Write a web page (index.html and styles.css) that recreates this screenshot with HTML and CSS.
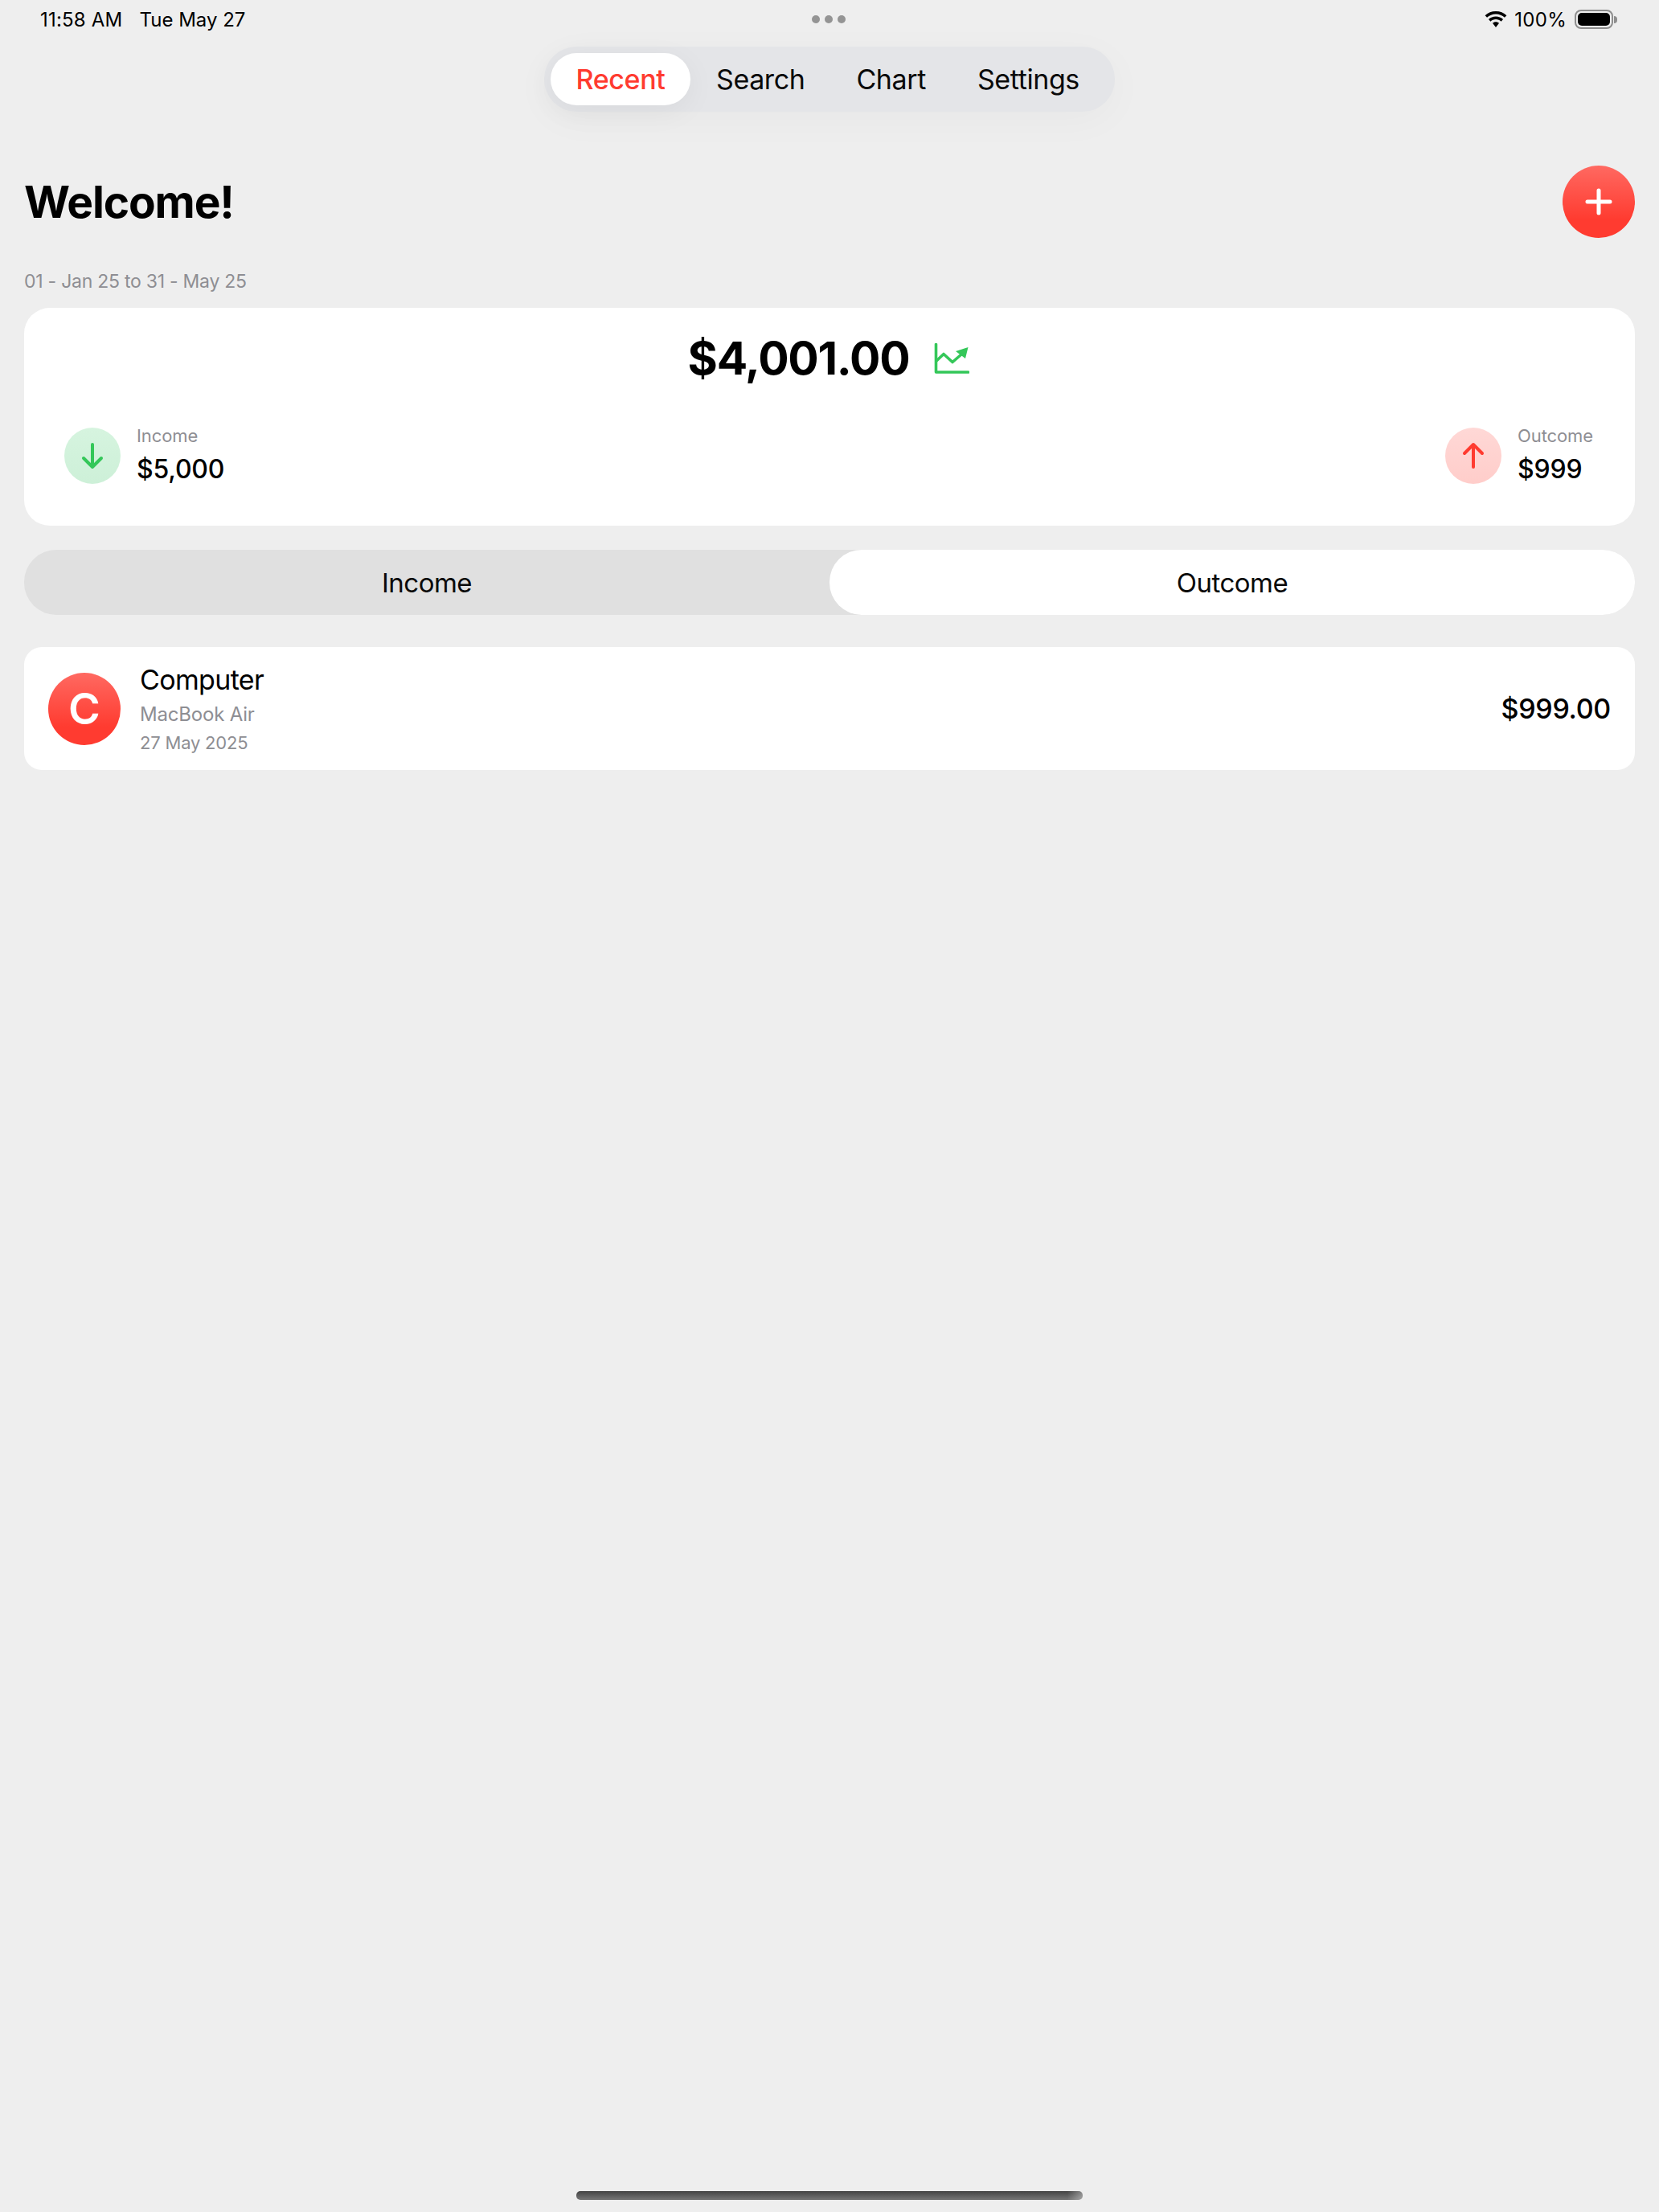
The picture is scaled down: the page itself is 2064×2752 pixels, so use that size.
FILE: index.html
```html
<!DOCTYPE html>
<html lang="en">
<head>
<meta charset="utf-8">
<title>Welcome</title>
<link rel="stylesheet" href="styles.css">
</head>
<body>
<div class="app">
  <header class="status">
    <div class="status-left"><span class="time">11:58 AM</span><span>Tue May 27</span></div>
    <div class="dots"><i></i><i></i><i></i></div>
    <div class="status-right">
      <svg class="wifi" width="28" height="20" viewBox="1.200 0 25.600 18.800"><path d="M14 3.4c4 0 7.600 1.500 10.300 4l2.300-2.500C23.300 1.800 18.900 0 14 0S4.700 1.800 1.400 4.900l2.300 2.500c2.700-2.500 6.300-4 10.300-4z"/><path d="M14 9.500c2.400 0 4.600.9 6.200 2.400l2.300-2.500C20.300 7.300 17.300 6 14 6S7.700 7.300 5.500 9.400l2.300 2.500c1.600-1.500 3.800-2.400 6.200-2.400z"/><path d="M14 12.400c-1.500 0-2.800.6-3.800 1.500l3.800 4.800 3.800-4.800c-1-.9-2.300-1.500-3.800-1.500z"/></svg>
      <span class="batt-text">100%</span>
      <div class="battery"><div class="battery-fill"></div></div><div class="battery-tip"></div>
    </div>
  </header>

  <nav class="tabs">
    <a class="tab tab-active">Recent</a>
    <a class="tab">Search</a>
    <a class="tab">Chart</a>
    <a class="tab">Settings</a>
  </nav>

  <main class="content">
    <div class="title-row">
      <h1 class="title">Welcome!</h1>
      <button class="add" aria-label="Add">
        <svg width="34" height="34" viewBox="0 0 34 34"><path d="M17 3v28M3 17h28" stroke="#fff" stroke-width="5" stroke-linecap="round"/></svg>
      </button>
    </div>
    <p class="range">01 - Jan 25 to 31 - May 25</p>

    <section class="summary">
      <div class="total">
        <span class="total-value">$4,001.00</span>
        <svg class="chart" width="44" height="38" viewBox="0 0 44 38" fill="none"><path d="M2.500 1.500V36h40" stroke="#34c759" stroke-width="3.600" stroke-linecap="round" stroke-linejoin="round"/><path d="M3 22l9-8.500 11 10 11-9.500" stroke="#34c759" stroke-width="3.600" stroke-linecap="round" stroke-linejoin="round"/><path d="M27 10l15.500-5L39 19z" fill="#34c759"/></svg>
      </div>
      <div class="flows">
        <div class="flow">
          <div class="flow-icon flow-in">
            <svg width="28" height="34" viewBox="0 0 28 34" fill="none"><path d="M14 3v28M3 20l11 11 11-11" stroke="#34c759" stroke-width="4" stroke-linecap="round" stroke-linejoin="round"/></svg>
          </div>
          <div class="flow-text"><span class="flow-label">Income</span><span class="flow-value">$5,000</span></div>
        </div>
        <div class="flow">
          <div class="flow-icon flow-out">
            <svg width="28" height="34" viewBox="0 0 28 34" fill="none"><path d="M14 31V3M3 14L14 3l11 11" stroke="#ff3b30" stroke-width="4" stroke-linecap="round" stroke-linejoin="round"/></svg>
          </div>
          <div class="flow-text"><span class="flow-label">Outcome</span><span class="flow-value">$999</span></div>
        </div>
      </div>
    </section>

    <div class="segment">
      <div class="seg">Income</div>
      <div class="seg seg-active">Outcome</div>
    </div>

    <article class="row">
      <div class="avatar">C</div>
      <div class="row-text">
        <span class="row-name">Computer</span>
        <span class="row-sub">MacBook Air</span>
        <span class="row-date">27 May 2025</span>
      </div>
      <div class="row-amount">$999.00</div>
    </article>
  </main>

  <div class="home"></div>
</div>
</body>
</html>
```
FILE: styles.css
```css
* { box-sizing: border-box; }
html, body { margin: 0; padding: 0; }
body { background: #eeeeee; font-family: Inter, "Liberation Sans", sans-serif; color: #000; }
.app { width: 2064px; height: 2752px; display: flex; flex-direction: column; }

.status { height: 48px; padding: 0 52px 0 50px; display: grid; grid-template-columns: 1fr auto 1fr; align-items: center; font-size: 24px; line-height: 29px; }
.status-left { display: flex; gap: 21px; }
.time { letter-spacing: 0.2px; }
.status-right { display: flex; justify-content: flex-end; align-items: center; }
.wifi { fill: #000; margin-right: 9px; }
.batt-text { margin-right: 10px; letter-spacing: 0.3px; }
.battery { width: 48px; height: 24px; border: 2px solid #8e8e8e; border-radius: 8px; padding: 2px; }
.battery-fill { height: 100%; background: #000; border-radius: 5px; }
.battery-tip { width: 4px; height: 9px; margin-left: 1px; background: #8e8e8e; border-radius: 0 4px 4px 0; }
.dots { display: flex; gap: 6px; }
.dots i { width: 10px; height: 10px; border-radius: 50%; background: #949494; }

.tabs { align-self: center; margin-top: 10px; width: 710px; height: 81px; padding: 8px; border-radius: 40px; background: #e4e5e8; display: flex; align-items: center; box-shadow: 0 10px 50px rgba(0,0,0,.03); font-size: 34px; line-height: 41px; letter-spacing: -0.4px; }
.tab { flex: none; display: flex; align-items: center; justify-content: center; height: 65px; padding: 0 32px; color: #0a0a0a; }
.tab-active { width: 174px; padding: 0; background: #fff; border-radius: 33px; color: #ff3b30; font-weight: 500; box-shadow: 0 8px 36px rgba(0,0,0,.05); }

.content { flex: 1; padding: 0 30px; display: flex; flex-direction: column; }
.title-row { margin-top: 67px; height: 90px; display: flex; justify-content: space-between; align-items: center; }
.title { margin: 0; font-size: 55px; line-height: 68px; font-weight: 700; letter-spacing: -1.1px; }
.add { width: 90px; height: 90px; padding: 0; border: 0; border-radius: 50%; background: linear-gradient(#ff6961, #ff3b30 75%); display: flex; align-items: center; justify-content: center; }
.range { margin: 40px 0 0; font-size: 23px; line-height: 28px; color: #8e8e93; letter-spacing: -0.25px; }

.summary { margin-top: 19px; height: 271px; background: #fff; border-radius: 32px; padding: 28px 52px 0 50px; }
.total { display: flex; justify-content: center; align-items: center; gap: 31px; height: 70px; }
.total-value { font-size: 57px; line-height: 70px; font-weight: 700; letter-spacing: -1.25px; }
.flows { margin-top: 49px; display: flex; justify-content: space-between; }
.flow { display: flex; align-items: center; gap: 20px; }
.flow-icon { width: 70px; height: 70px; border-radius: 50%; display: flex; align-items: center; justify-content: center; }
.flow-in { background: linear-gradient(#d6f4df, #cdf0d8); }
.flow-out { background: linear-gradient(#ffd8d6, #ffcdca); }
.flow-text { display: flex; flex-direction: column; }
.flow-label { font-size: 22px; line-height: 24px; color: #8e8e93; letter-spacing: -0.1px; }
.flow-value { margin-top: 10px; font-size: 32px; line-height: 40px; font-weight: 500; letter-spacing: -0.2px; }

.segment { margin-top: 30px; height: 81px; display: grid; grid-template-columns: 1002px 1002px; background: #e0e0e0; border-radius: 40px; font-size: 33px; letter-spacing: -0.5px; }
.seg { display: flex; align-items: center; justify-content: center; color: #0a0a0a; }
.seg-active { background: #fff; border-radius: 40px; }

.row { margin-top: 40px; height: 153px; background: #fff; border-radius: 22px; display: flex; align-items: center; padding: 0 30px; }
.avatar { width: 90px; height: 90px; border-radius: 50%; background: linear-gradient(#ff6961, #ff3b30 75%); color: #fff; font-size: 54px; font-weight: 600; display: flex; align-items: center; justify-content: center; }
.row-text { margin-left: 24px; flex: 1; display: flex; flex-direction: column; }
.row-name { font-size: 34px; line-height: 41px; letter-spacing: -0.65px; }
.row-sub { margin-top: 8px; font-size: 24px; line-height: 29px; color: #8e8e93; letter-spacing: -0.2px; }
.row-date { margin-top: 8px; font-size: 22px; line-height: 27px; color: #8e8e93; letter-spacing: -0.2px; }
.row-amount { font-size: 34px; font-weight: 500; letter-spacing: -0.3px; }

.home { align-self: center; margin-bottom: 15px; width: 630px; height: 11px; border-radius: 5px; background: linear-gradient(to right, rgba(238,238,238,0) 97%, rgba(238,238,238,.4)), linear-gradient(#444, #777); }
```
